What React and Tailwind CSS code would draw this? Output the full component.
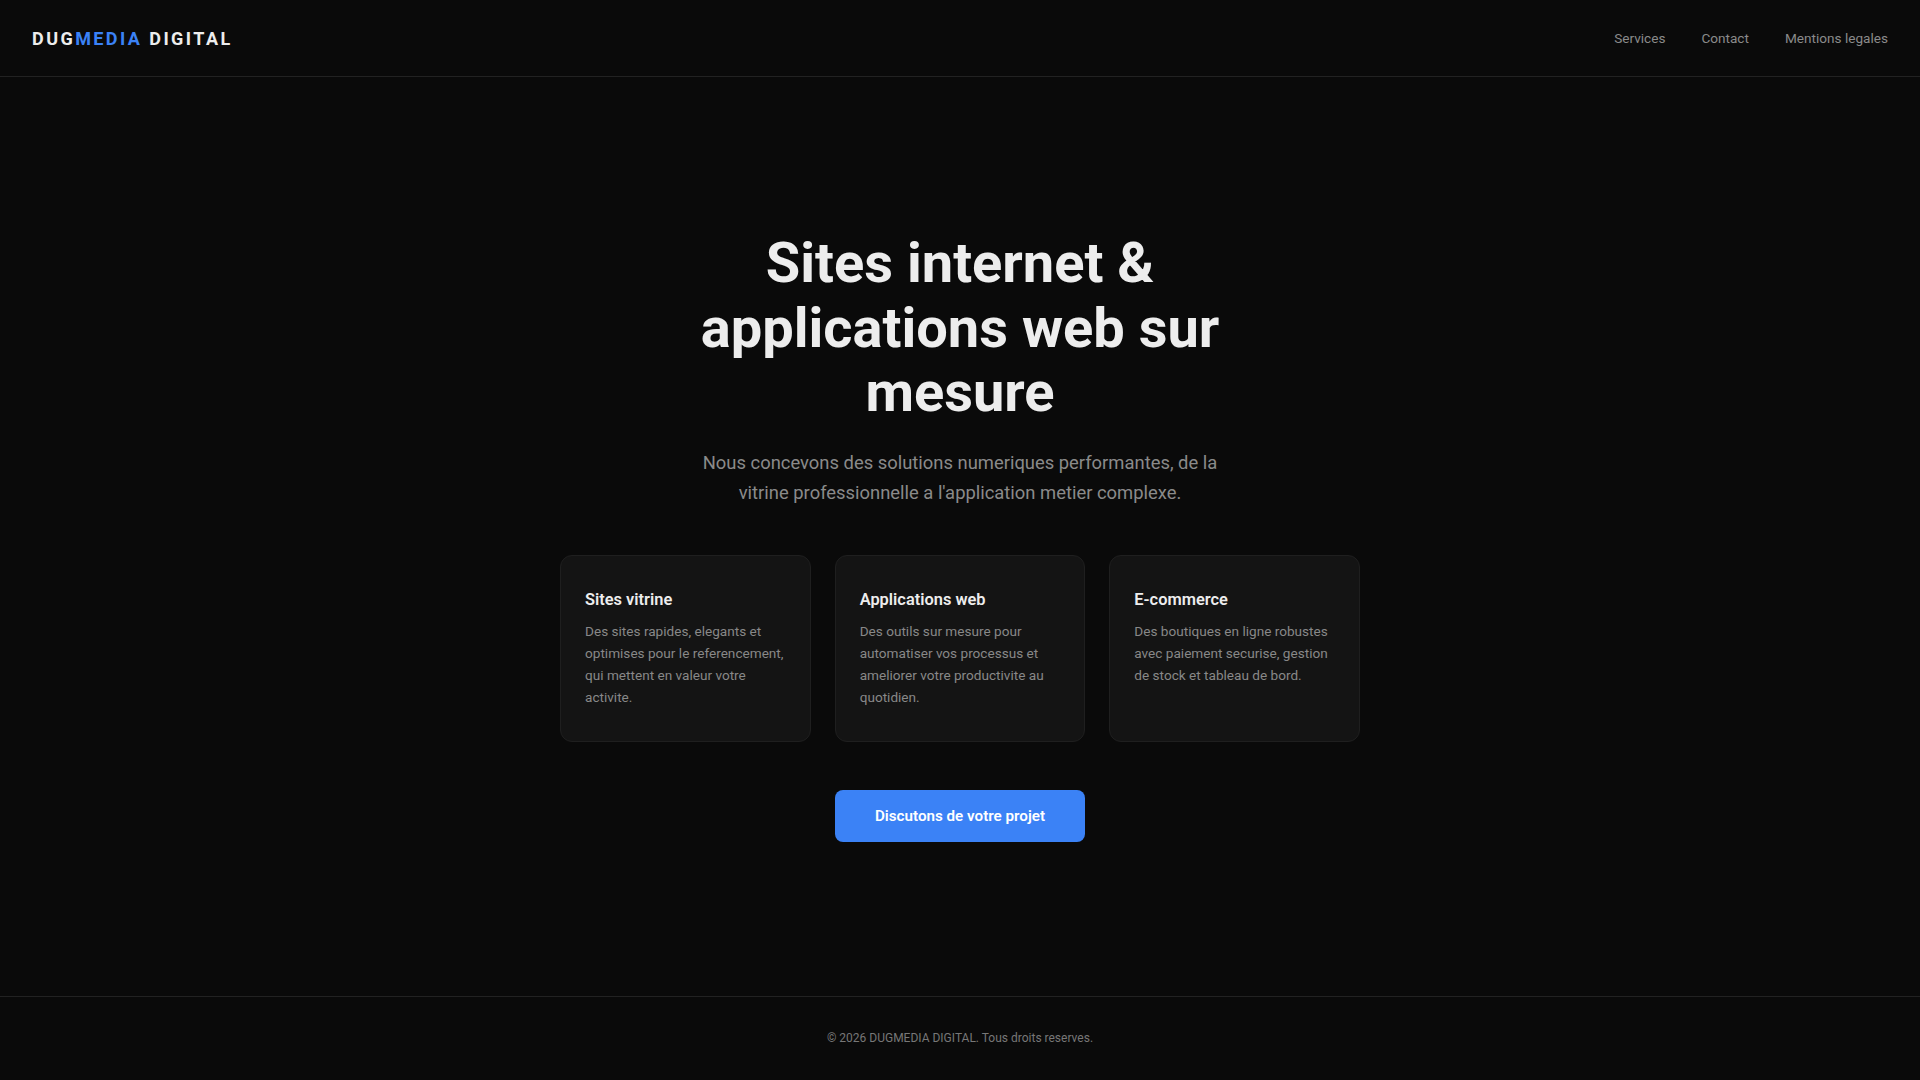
export default function App() {
  const cards = [
    {
      title: "Sites vitrine",
      text: "Des sites rapides, elegants et optimises pour le referencement, qui mettent en valeur votre activite.",
    },
    {
      title: "Applications web",
      text: "Des outils sur mesure pour automatiser vos processus et ameliorer votre productivite au quotidien.",
    },
    {
      title: "E-commerce",
      text: "Des boutiques en ligne robustes avec paiement securise, gestion de stock et tableau de bord.",
    },
  ];
  return (
    <div
      className="min-h-screen flex flex-col bg-[#0a0a0a] text-[#ededed]"
      style={{ fontFamily: "Roboto, 'Noto Sans', sans-serif" }}
    >
      <header className="flex items-center justify-between px-8 h-[77px] border-b border-[#222222]">
        <div className="text-[18px] font-bold tracking-[0.135em] text-[#ededed]">
          DUG<span className="text-[#3b82f6]">MEDIA</span> DIGITAL
        </div>
        <nav className="flex items-center gap-9 text-[13.6px] text-[#8a8a8a]">
          <a href="#">Services</a>
          <a href="#">Contact</a>
          <a href="#">Mentions legales</a>
        </nav>
      </header>

      <main className="flex-1 flex flex-col items-center justify-center px-6">
        <h1 className="max-w-[600px] text-center text-[56px] leading-[1.15] font-bold text-[#ededed] mb-6">
          Sites internet &amp; applications web sur mesure
        </h1>
        <p className="max-w-[550px] text-center text-[18.4px] leading-[1.58] text-[#8a8a8a] mb-12">
          Nous concevons des solutions numeriques performantes, de la vitrine professionnelle a l'application metier complexe.
        </p>
        <div className="grid grid-cols-3 gap-6 w-full max-w-[800px]">
          {cards.map((c) => (
            <div
              key={c.title}
              className="rounded-xl border border-[#1f1f1f] bg-[#141414] px-6 py-8"
            >
              <h3 className="text-[16.4px] leading-[1.5] font-semibold text-[#ededed] mb-2">
                {c.title}
              </h3>
              <p className="text-[13.6px] leading-[1.625] text-[#888888]">{c.text}</p>
            </div>
          ))}
        </div>
        <a
          href="#"
          className="mt-12 inline-block rounded-lg bg-[#3b82f6] px-10 py-[15px] text-[15.2px] leading-[1.45] font-semibold text-white"
        >
          Discutons de votre projet
        </a>
      </main>

      <footer className="border-t border-[#222222] py-8 text-center text-[12px] leading-[1.6] text-[#777777]">
        © 2026 DUGMEDIA DIGITAL. Tous droits reserves.
      </footer>
    </div>
  );
}
